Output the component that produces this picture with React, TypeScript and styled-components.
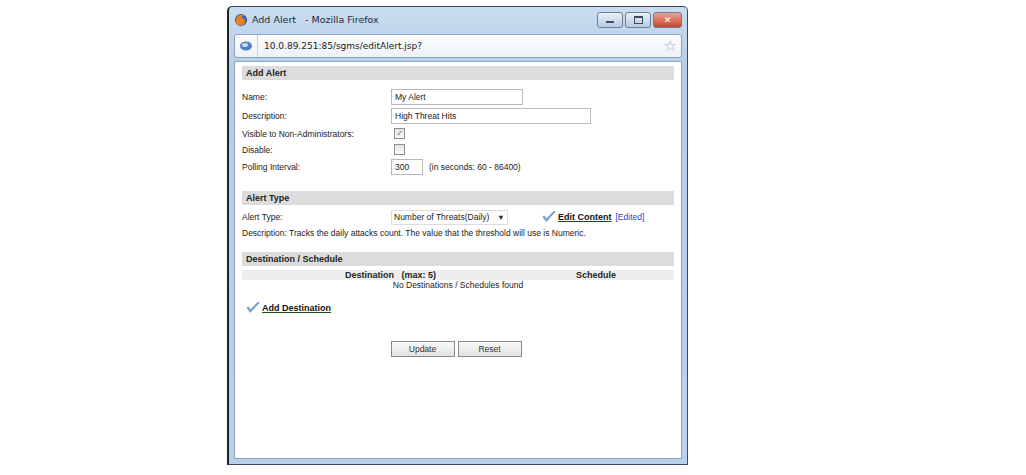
import React from "react";
import styled, { createGlobalStyle } from "styled-components";

const Global = createGlobalStyle`
  html, body { margin: 0; padding: 0; background: #fff; }
  body { font-family: "Liberation Sans", "DejaVu Sans", sans-serif; }
`;

const Check = ({ size = 14 }: { size?: number }) => (
  <svg width={size} height={size} viewBox="0 0 16 16">
    <path d="M1 8 L5 13 L15 2 L13.5 1.5 L5 10 L2.5 6.5 Z" fill="#7ea9d6" stroke="#4f7fb8" strokeWidth="0.6" />
  </svg>
);

const App = () => (
  <>
    <Global />
    <S.Desktop>
      <S.Window>
        <S.TitleBar>
          <S.TitleLeft>
            <svg width="14" height="14" viewBox="0 0 16 16">
              <circle cx="8" cy="8" r="7" fill="#3a5fa8" />
              <path d="M2 9 C2 3 8 1 12 3 C9 3 8 5 10 6 C13 7 14 11 10 14 C5 15 2 13 2 9Z" fill="#e8821e" />
            </svg>
            <span>Add Alert&nbsp;&nbsp;&nbsp;- Mozilla Firefox</span>
          </S.TitleLeft>
          <S.WinButtons>
            <S.WinBtn>
              <S.MinGlyph />
            </S.WinBtn>
            <S.WinBtn>
              <S.MaxGlyph />
            </S.WinBtn>
            <S.WinBtn close>✕</S.WinBtn>
          </S.WinButtons>
        </S.TitleBar>
        <S.UrlBar>
          <S.UrlIcon>
            <svg width="14" height="12" viewBox="0 0 14 12">
              <ellipse cx="7" cy="6" rx="6" ry="4.5" fill="#4d7fc4" />
              <ellipse cx="6" cy="5" rx="3" ry="2" fill="#c9dcf3" />
            </svg>
          </S.UrlIcon>
          <S.UrlText>10.0.89.251:85/sgms/editAlert.jsp?</S.UrlText>
          <S.Star>☆</S.Star>
        </S.UrlBar>
        <S.Content>
          <S.SectionHeader>Add Alert</S.SectionHeader>
          <S.Rows pad={9}>
            <S.Row>
              <S.Label>Name:</S.Label>
              <S.TextBox w={132}>My Alert</S.TextBox>
            </S.Row>
            <S.Row>
              <S.Label>Description:</S.Label>
              <S.TextBox w={200}>High Threat Hits</S.TextBox>
            </S.Row>
            <S.Row tight>
              <S.Label>Visible to Non-Administrators:</S.Label>
              <S.CheckBox>✓</S.CheckBox>
            </S.Row>
            <S.Row tight>
              <S.Label>Disable:</S.Label>
              <S.CheckBox />
            </S.Row>
            <S.Row>
              <S.Label>Polling Interval:</S.Label>
              <S.TextBox w={32}>300</S.TextBox>
              <S.Hint>(in seconds: 60 - 86400)</S.Hint>
            </S.Row>
          </S.Rows>
          <S.SectionHeader top={16}>Alert Type</S.SectionHeader>
          <S.Rows pad={4}>
            <S.Row>
              <S.Label>Alert Type:</S.Label>
              <S.Select>
                Number of Threats(Daily)
                <span>▾</span>
              </S.Select>
              <S.EditLink>
                <Check />
                <S.BoldLink>Edit Content</S.BoldLink>
                <S.Edited>[Edited]</S.Edited>
              </S.EditLink>
            </S.Row>
            <S.Text>Description: Tracks the daily attacks count. The value that the threshold will use is Numeric.</S.Text>
          </S.Rows>
          <S.SectionHeader top={14}>Destination / Schedule</S.SectionHeader>
          <S.TableHead>
            <S.DestCol>Destination&nbsp;&nbsp;&nbsp;(max: 5)</S.DestCol>
            <S.SchedCol>Schedule</S.SchedCol>
          </S.TableHead>
          <S.Empty>No Destinations / Schedules found</S.Empty>
          <S.AddDest>
            <Check />
            <S.BoldLink>Add Destination</S.BoldLink>
          </S.AddDest>
          <S.Buttons>
            <S.Button>Update</S.Button>
            <S.Button>Reset</S.Button>
          </S.Buttons>
        </S.Content>
      </S.Window>
    </S.Desktop>
  </>
);

export default App;

const S = {
  Desktop: styled.div`
    width: 1026px;
    height: 475px;
    padding: 6px 0 0 227px;
    box-sizing: border-box;
  `,
  Window: styled.div`
    width: 461px;
    height: 459px;
    box-sizing: border-box;
    background: linear-gradient(#c9dcef, #b6cfe8 60px, #b9d1ea);
    border: 1px solid #3b4a5c;
    border-left: 2px solid #222;
    border-radius: 5px 5px 0 0;
    padding: 0 5px 5px 5px;
    display: flex;
    flex-direction: column;
  `,
  TitleBar: styled.div`
    height: 25px;
    display: flex;
    align-items: center;
    justify-content: space-between;
  `,
  TitleLeft: styled.div`
    display: flex;
    align-items: center;
    gap: 4px;
    font-family: "DejaVu Sans", sans-serif;
    font-size: 9.5px;
    color: #1d2a3a;
  `,
  WinButtons: styled.div`
    display: flex;
    gap: 2px;
    align-items: center;
  `,
  WinBtn: styled.div<{ close?: boolean }>`
    width: ${(p) => (p.close ? 27 : 24)}px;
    height: 14px;
    border: 1px solid #6d7f96;
    border-radius: 3px;
    background: ${(p) => (p.close ? "linear-gradient(#e6a493, #c8452d)" : "linear-gradient(#eaf1f9, #b9cce3)")};
    color: #fff;
    font-size: 9px;
    font-weight: bold;
    display: flex;
    align-items: center;
    justify-content: center;
  `,
  MinGlyph: styled.div`
    width: 8px;
    height: 2px;
    margin-top: 5px;
    background: #3d4b5e;
  `,
  MaxGlyph: styled.div`
    width: 7px;
    height: 5px;
    border: 1px solid #3d4b5e;
    border-top-width: 2px;
  `,
  UrlBar: styled.div`
    height: 22px;
    margin: 2px 0 3px;
    border: 1px solid #8da2bb;
    border-radius: 3px;
    background: linear-gradient(#fbfcfe, #eef2f7);
    display: flex;
    align-items: center;
  `,
  UrlIcon: styled.div`
    width: 22px;
    height: 100%;
    display: flex;
    align-items: center;
    justify-content: center;
    border-right: 1px solid #c6d1de;
  `,
  UrlText: styled.div`
    flex: 1;
    padding-left: 6px;
    font-family: "DejaVu Sans", sans-serif;
    font-size: 9px;
    color: #222;
  `,
  Star: styled.div`
    font-size: 15px;
    color: #a8b2bd;
    padding-right: 4px;
  `,
  Content: styled.div`
    flex: 1;
    background: #fff;
    border: 1px solid #8da2bb;
    padding: 4px 7px 0 7px;
    font-size: 8.5px;
    color: #222;
  `,
  SectionHeader: styled.div<{ top?: number }>`
    margin-top: ${(p) => p.top ?? 0}px;
    height: 14px;
    line-height: 14px;
    background: #dcdcdc;
    padding-left: 4px;
    font-weight: bold;
    font-size: 9px;
    color: #222;
  `,
  Rows: styled.div<{ pad: number }>`
    padding-top: ${(p) => p.pad}px;
    display: flex;
    flex-direction: column;
    gap: 3px;
  `,
  Row: styled.div<{ tight?: boolean }>`
    display: flex;
    align-items: center;
    min-height: ${(p) => (p.tight ? 13 : 16)}px;
  `,
  Label: styled.div`
    width: 149px;
    flex-shrink: 0;
  `,
  TextBox: styled.div<{ w: number }>`
    width: ${(p) => p.w}px;
    height: 16px;
    box-sizing: border-box;
    border: 1px solid #b9b9b9;
    padding-left: 3px;
    line-height: 14px;
  `,
  CheckBox: styled.div`
    width: 9px;
    height: 9px;
    margin-left: 3px;
    border: 1px solid #8f8f8f;
    background: linear-gradient(#e4e4e4, #fafafa);
    font-size: 8px;
    line-height: 9px;
    text-align: center;
    color: #4a5d8a;
  `,
  Hint: styled.div`
    margin-left: 6px;
  `,
  Select: styled.div`
    width: 117px;
    height: 15px;
    box-sizing: border-box;
    border: 1px solid #dcdcdc;
    padding: 0 4px 0 2px;
    display: flex;
    align-items: center;
    justify-content: space-between;
  `,
  EditLink: styled.div`
    margin-left: 34px;
    display: flex;
    align-items: center;
    gap: 2px;
  `,
  BoldLink: styled.span`
    font-weight: bold;
    font-size: 9px;
    color: #111;
    text-decoration: underline;
    text-decoration-color: #1b4d1b;
  `,
  Edited: styled.span`
    color: #2a3fd0;
    margin-left: 2px;
  `,
  Text: styled.div`
    padding-top: 0;
  `,
  TableHead: styled.div`
    margin-top: 4px;
    height: 10px;
    line-height: 10px;
    background: #eeeeee;
    font-weight: bold;
    font-size: 9px;
    display: grid;
    grid-template-columns: 290px 1fr;
  `,
  DestCol: styled.div`
    text-align: right;
    padding-right: 96px;
  `,
  SchedCol: styled.div`
    padding-left: 44px;
  `,
  Empty: styled.div`
    text-align: center;
    line-height: 11px;
  `,
  AddDest: styled.div`
    margin-top: 10px;
    padding-left: 4px;
    display: flex;
    align-items: center;
    gap: 2px;
  `,
  Buttons: styled.div`
    margin-top: 26px;
    display: flex;
    justify-content: center;
    gap: 3px;
    padding-right: 4px;
  `,
  Button: styled.div`
    width: 64px;
    height: 16px;
    box-sizing: border-box;
    border: 1px solid #8a8a8a;
    background: linear-gradient(#fafafa, #e2e2e2);
    line-height: 14px;
    text-align: center;
    color: #333;
  `,
};
